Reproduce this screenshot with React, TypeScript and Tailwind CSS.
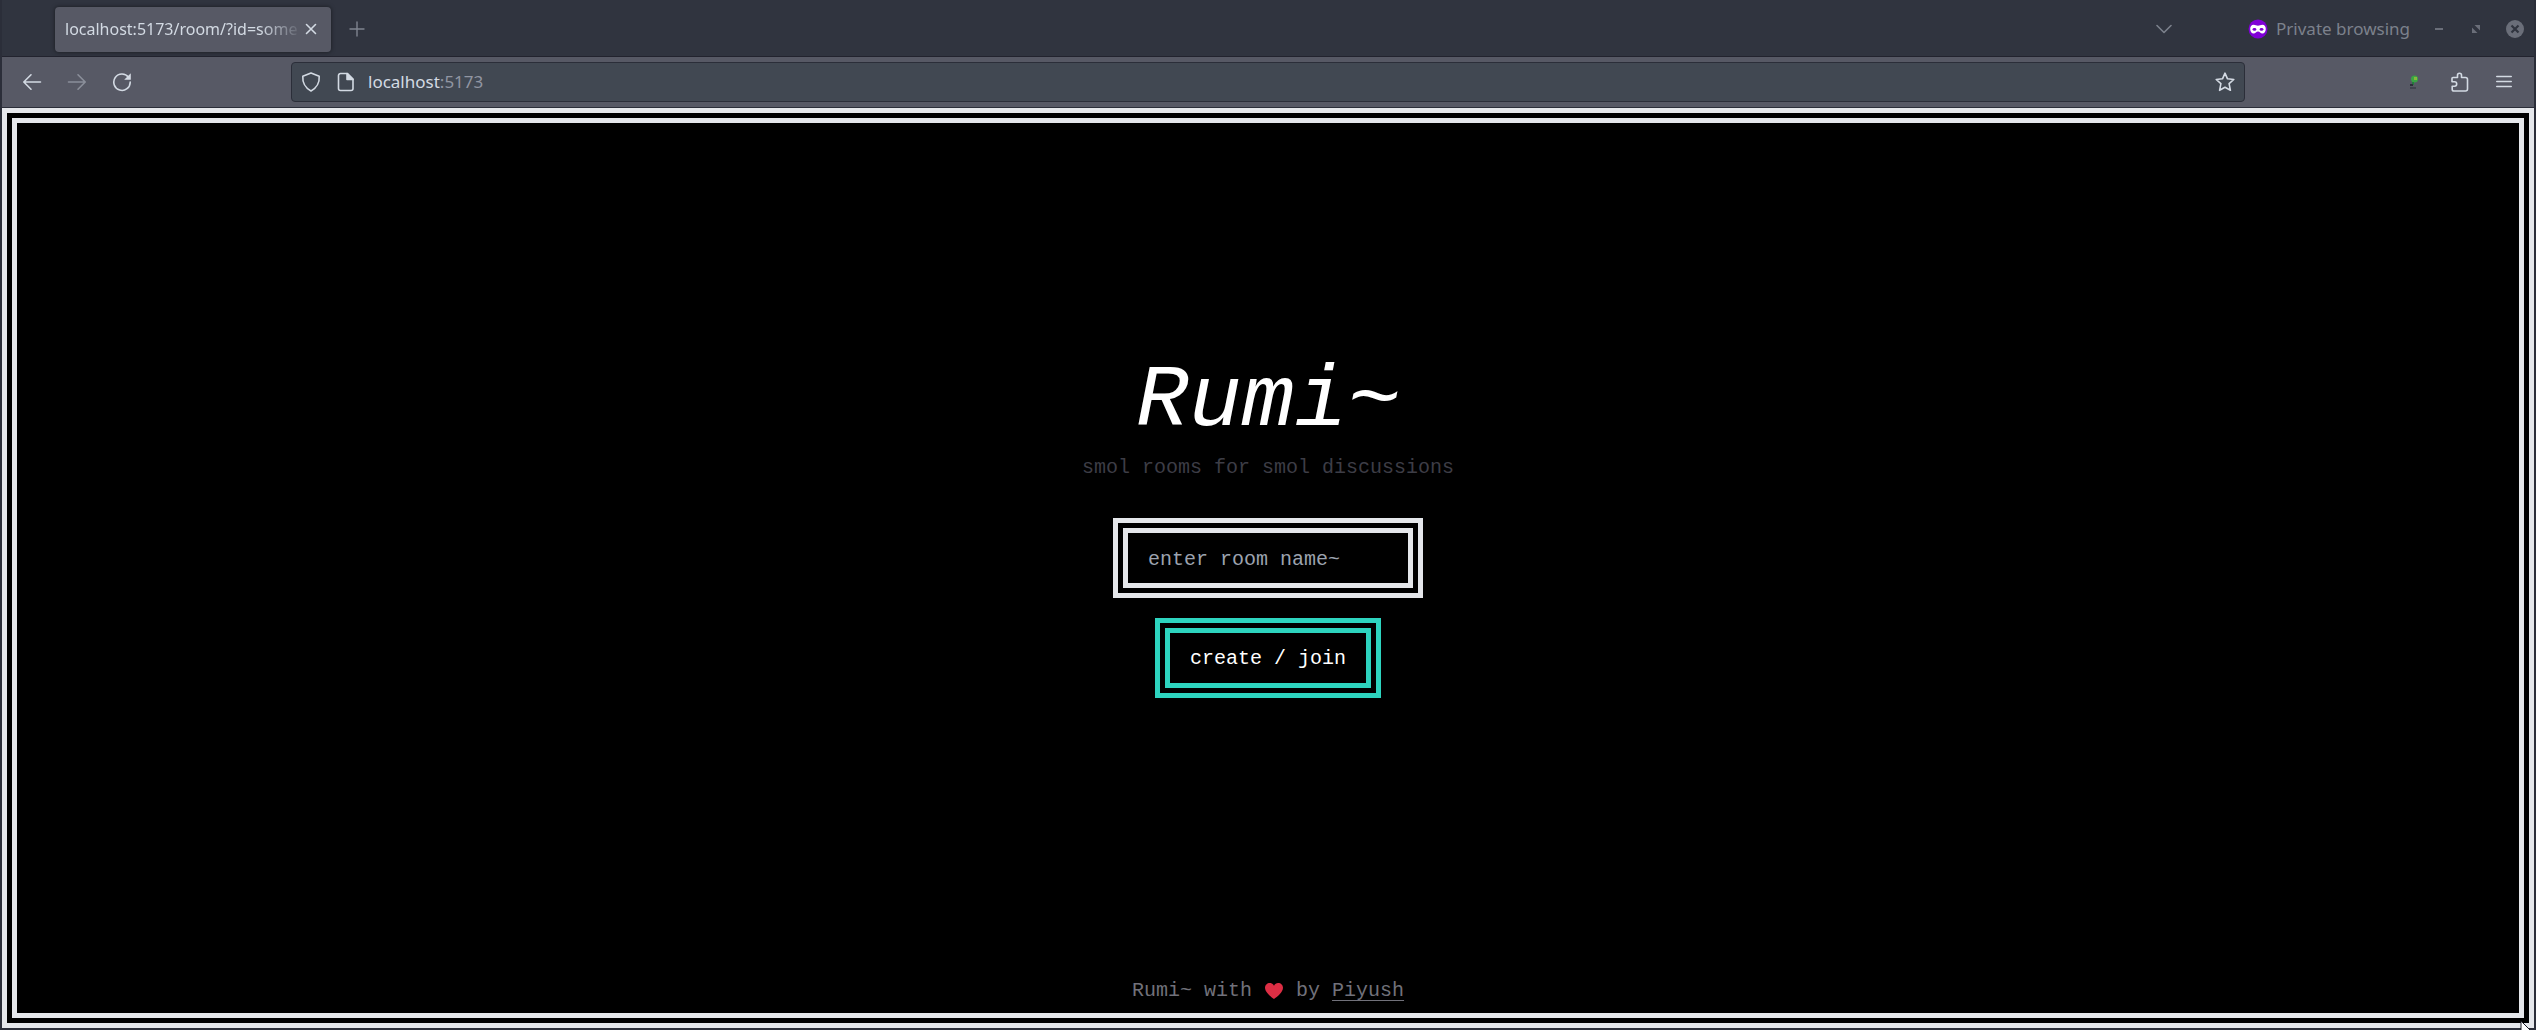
import type { ReactNode } from 'react';

function Icon({ children, size = 20, box = '0 0 20 20' }: { children: ReactNode; size?: number; box?: string }) {
  return (
    <svg
      width={size}
      height={size}
      viewBox={box}
      fill="none"
      stroke="currentColor"
      strokeWidth="1.6"
      strokeLinecap="round"
      strokeLinejoin="round"
      aria-hidden="true"
      className="shrink-0"
    >
      {children}
    </svg>
  );
}

function TabBar() {
  return (
    <div className="flex h-[57px] items-center border-b border-[#22232e] bg-[#30343f] pl-[53px] pr-[10px] pt-[2px]">
      <div className="flex h-[45px] w-[276px] items-center rounded bg-[#575965] pl-[10px] pr-[14px] text-[#d3dae3] shadow-[0_0_4px_rgba(0,0,0,0.5)]">
        <span className="min-w-0 flex-1 overflow-hidden whitespace-nowrap text-[16px] [mask-image:linear-gradient(to_right,black_82%,transparent)]">
          localhost:5173/room/?id=some
        </span>
        <button type="button" aria-label="Close tab" className="ml-[2px]">
          <Icon size={12} box="0 0 12 12">
            <path d="M1.5 1.5l9 9M10.5 1.5l-9 9" />
          </Icon>
        </button>
      </div>
      <button type="button" aria-label="New tab" className="ml-[18px] text-[#7f8490]">
        <Icon size={16} box="0 0 16 16">
          <path d="M8 1v14M1 8h14" strokeWidth="1.4" />
        </Icon>
      </button>
      <div className="ml-auto flex items-center text-[#7c818c]">
        <button type="button" aria-label="List all tabs" className="mr-[76px]">
          <Icon size={16} box="0 0 16 16">
            <path d="M1 4.5l7 7 7-7" />
          </Icon>
        </button>
        <svg width="20" height="20" viewBox="0 0 20 20" aria-hidden="true" className="mr-2 shrink-0">
          <circle cx="10" cy="10" r="9.5" fill="#8000d7" />
          <path
            fill="#fff"
            fillRule="evenodd"
            d="M5.6 5.8c1.900 0 2.800 1 4.400 1s2.500-1 4.400-1c2.200 0 3.400 1.600 3.400 4.200s-1.500 4.600-3.400 4.600c-1.900 0-2.700-2-4.400-2s-2.500 2-4.400 2C3.700 14.600 2.200 12.600 2.200 10s1.200-4.200 3.400-4.200zM4.300 10.400c.6.900 1.400 1.300 2.300 1.300s1.500-.5 1.900-1.300c-.4-.9-1.100-1.400-2-1.400s-1.700.5-2.200 1.400zM11.500 10.400c.4.800 1 1.300 1.900 1.300s1.700-.4 2.300-1.300c-.5-.9-1.300-1.400-2.200-1.400s-1.600.5-2 1.400z"
          />
        </svg>
        <span className="text-[17px]">Private browsing</span>
        <button type="button" aria-label="Minimize" className="ml-[25px]">
          <svg width="8" height="20" viewBox="0 0 8 20" className="block" aria-hidden="true">
            <path d="M0 10h8" stroke="#6a6e79" strokeWidth="2" />
          </svg>
        </button>
        <button type="button" aria-label="Restore" className="ml-[29px]">
          <svg width="8" height="20" viewBox="0 0 8 20" className="block" aria-hidden="true">
            <path d="M2.500 6H8v5.500zM0 8.500V14h5.500z" fill="#6a6e79" />
          </svg>
        </button>
        <button type="button" aria-label="Close window" className="ml-[26px]">
          <svg width="18" height="18" viewBox="0 0 18 18" className="block" aria-hidden="true">
            <circle cx="9" cy="9" r="9" fill="#6a6e79" />
            <path d="M5.500 5.500l7 7M12.500 5.500l-7 7" stroke="#30343f" strokeWidth="2.200" />
          </svg>
        </button>
      </div>
    </div>
  );
}

function Toolbar() {
  return (
    <div className="flex h-[51px] items-center border-b border-[#2b2e39] bg-[#575965] text-[#d3dae3]">
      <div className="flex w-[289px] shrink-0 items-center gap-[25px] pl-5">
        <button type="button" aria-label="Back">
          <Icon>
            <path d="M18.500 10H2M9 2.800L1.800 10 9 17.200" />
          </Icon>
        </button>
        <button type="button" aria-label="Forward" className="text-[#8b8f9a]">
          <Icon>
            <path d="M1.500 10H18M11 2.800l7.200 7.200-7.200 7.200" />
          </Icon>
        </button>
        <button type="button" aria-label="Reload">
          <Icon>
            <path d="M16.500 5.200A8.200 8.200 0 1 0 18.200 10" />
            <path d="M18.800 1.200v6.600h-6.600z" fill="currentColor" stroke="none" />
          </Icon>
        </button>
      </div>
      <div className="flex h-10 flex-1 items-center rounded border border-[#2b2e39] bg-[#414852] px-[9px]">
        <Icon>
          <path d="M10 1L18.200 4.300C18.600 9.600 16.200 15.800 10 19 3.800 15.800 1.400 9.600 1.800 4.300z" />
        </Icon>
        <span className="ml-[15px] flex">
          <Icon>
            <path d="M4.500 1.500H11.500L17 7V16.500a2 2 0 0 1-2 2H4.500a2 2 0 0 1-2-2V3.500a2 2 0 0 1 2-2z" />
            <path d="M11 1.500V7.500H17z" fill="currentColor" />
          </Icon>
        </span>
        <p className="ml-3 flex-1 text-[17px]">
          localhost<span className="text-[#9196a2]">:5173</span>
        </p>
        <button type="button" aria-label="Bookmark this page">
          <Icon>
            <path d="M10 1.200l2.500 5.600 6.300.7-4.700 4.200 1.300 6.600L10 15.300l-5.400 3 1.300-6.600L1.200 7.500l6.300-.7z" />
          </Icon>
        </button>
      </div>
      <div className="flex w-[289px] shrink-0 items-center justify-end pr-[22px]">
        <button type="button" aria-label="Extension">
          <svg width="10" height="14" viewBox="0 0 10 14" className="block" aria-hidden="true">
            <circle cx="5.500" cy="4" r="3.500" fill="#3aa544" />
            <path d="M5 2h3v3H5z" fill="#86b83c" />
            <path d="M3 7h2v3H3z" fill="#257a3c" />
            <path d="M1 9h3v2H1zM1 12.500h6v1H1z" fill="#2b2e39" />
          </svg>
        </button>
        <button type="button" aria-label="Extensions" className="ml-[31px]">
          <Icon>
            <path d="M3 5.500H7.500V3.200a2 2 0 0 1 4 0V5.500H15.500a2 2 0 0 1 2 2V17a2 2 0 0 1-2 2H4a1.800 1.800 0 0 1-1.800-1.800V14.200H4.500a2.200 2.200 0 0 0 0-4.400H2V6.500a1 1 0 0 1 1-1z" />
          </Icon>
        </button>
        <button type="button" aria-label="Open application menu" className="ml-[26px]">
          <Icon size={16} box="0 0 16 16">
            <path d="M.8 2.500h14.400M.8 7.500h14.400M.8 12.500h14.400" />
          </Icon>
        </button>
      </div>
    </div>
  );
}

function Room() {
  return (
    <div className="flex flex-1 flex-col border-[15px] border-double border-[#e5e7eb] bg-black font-['Liberation_Mono',monospace] text-[20px] leading-7">
      <main className="flex flex-1 flex-col items-center justify-center">
        <h1 className="pt-2 text-[88px] italic leading-[96px] text-white">Rumi~</h1>
        <p className="mt-1 text-[#3d3d46]">smol rooms for smol discussions</p>
        <form className="mt-9 flex flex-col items-center gap-5" onSubmit={(e) => e.preventDefault()}>
          <input
            type="text"
            aria-label="Room name"
            placeholder="enter room name~"
            className="h-20 w-[310px] border-[15px] border-double border-[#e5e7eb] bg-black px-5 pt-[2px] text-white placeholder:text-[#9ca3af]"
          />
          <button type="submit" className="h-20 border-[15px] border-double border-[#2dd4bf] px-5 pt-[2px] text-white">
            create / join
          </button>
        </form>
      </main>
      <footer className="flex items-center justify-center whitespace-pre pb-2 pt-14 text-[#71717a]">
        {'Rumi~ with '}
        <svg width="20" height="18" viewBox="0 0 22 20" role="img" aria-label="love">
          <path
            fill="#dd2e44"
            d="M11 4.200C12 1.800 13.600 1 15.500 1 18.700 1 21 3.300 21 6.500 21 11.500 14.500 16.500 11 19 7.500 16.500 1 11.500 1 6.500 1 3.300 3.300 1 6.500 1 8.400 1 10 1.800 11 4.200z"
          />
        </svg>
        {' by '}
        <a href="#piyush" className="underline decoration-1 underline-offset-4">Piyush</a>
      </footer>
    </div>
  );
}

export default function App() {
  return (
    <div className="relative flex min-h-screen flex-col overflow-hidden bg-[#2b2e39] px-[2px] pb-[2px] font-['Noto_Sans',sans-serif]">
      <TabBar />
      <Toolbar />
      <Room />
      <svg width="16" height="9" viewBox="0 0 16 9" className="absolute bottom-0 right-0" aria-hidden="true">
        <path d="M1 0l10 10H1z" fill="#fff" stroke="#1a1a22" />
      </svg>
    </div>
  );
}
